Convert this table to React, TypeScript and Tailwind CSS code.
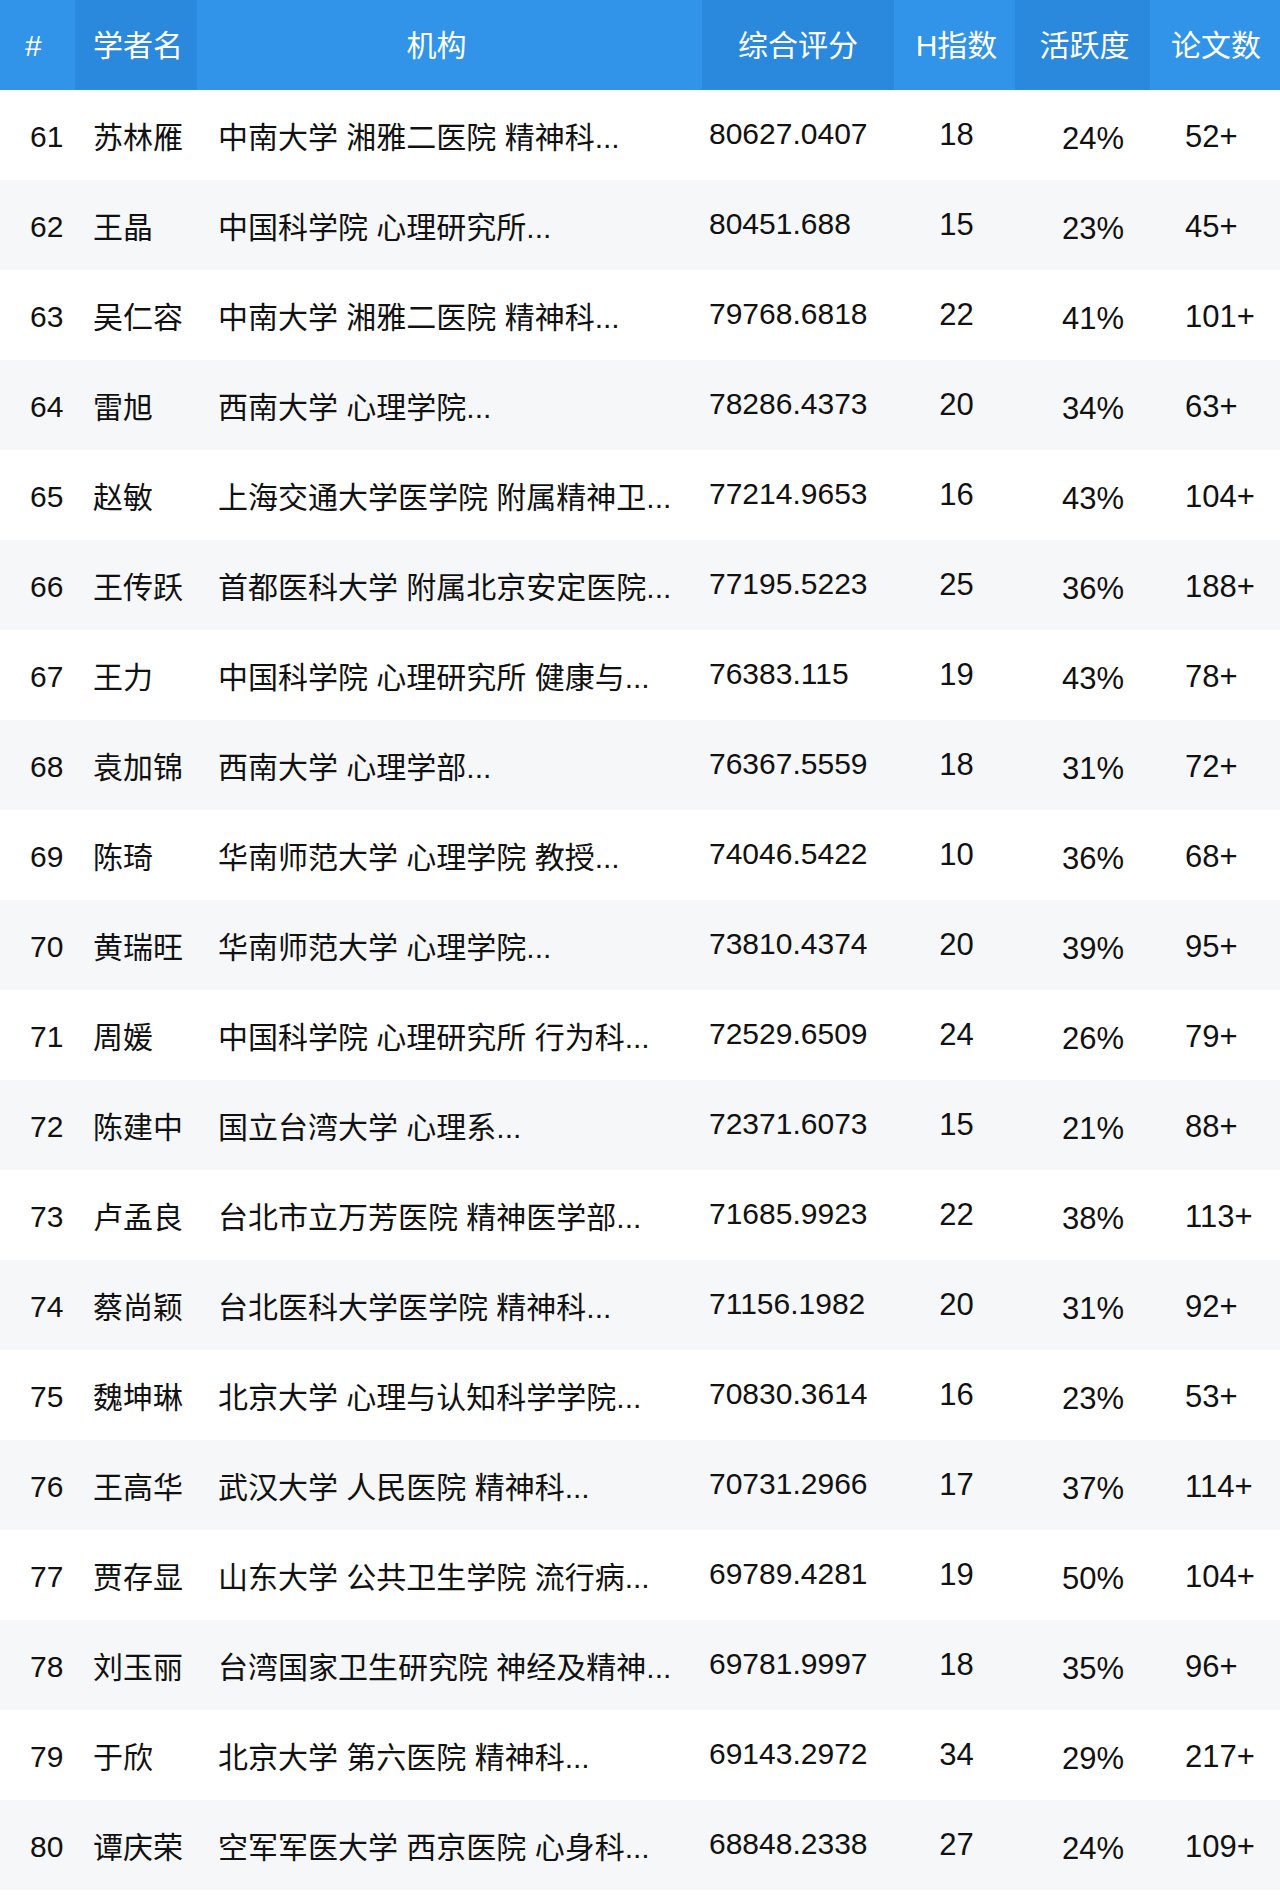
const rows = [
  { rank: 61, name: '苏林雁', org: '中南大学 湘雅二医院 精神科...', score: '80627.0407', h: 18, active: '24%', papers: '52+' },
  { rank: 62, name: '王晶', org: '中国科学院 心理研究所...', score: '80451.688', h: 15, active: '23%', papers: '45+' },
  { rank: 63, name: '吴仁容', org: '中南大学 湘雅二医院 精神科...', score: '79768.6818', h: 22, active: '41%', papers: '101+' },
  { rank: 64, name: '雷旭', org: '西南大学 心理学院...', score: '78286.4373', h: 20, active: '34%', papers: '63+' },
  { rank: 65, name: '赵敏', org: '上海交通大学医学院 附属精神卫...', score: '77214.9653', h: 16, active: '43%', papers: '104+' },
  { rank: 66, name: '王传跃', org: '首都医科大学 附属北京安定医院...', score: '77195.5223', h: 25, active: '36%', papers: '188+' },
  { rank: 67, name: '王力', org: '中国科学院 心理研究所 健康与...', score: '76383.115', h: 19, active: '43%', papers: '78+' },
  { rank: 68, name: '袁加锦', org: '西南大学 心理学部...', score: '76367.5559', h: 18, active: '31%', papers: '72+' },
  { rank: 69, name: '陈琦', org: '华南师范大学 心理学院 教授...', score: '74046.5422', h: 10, active: '36%', papers: '68+' },
  { rank: 70, name: '黄瑞旺', org: '华南师范大学 心理学院...', score: '73810.4374', h: 20, active: '39%', papers: '95+' },
  { rank: 71, name: '周媛', org: '中国科学院 心理研究所 行为科...', score: '72529.6509', h: 24, active: '26%', papers: '79+' },
  { rank: 72, name: '陈建中', org: '国立台湾大学 心理系...', score: '72371.6073', h: 15, active: '21%', papers: '88+' },
  { rank: 73, name: '卢孟良', org: '台北市立万芳医院 精神医学部...', score: '71685.9923', h: 22, active: '38%', papers: '113+' },
  { rank: 74, name: '蔡尚颖', org: '台北医科大学医学院 精神科...', score: '71156.1982', h: 20, active: '31%', papers: '92+' },
  { rank: 75, name: '魏坤琳', org: '北京大学 心理与认知科学学院...', score: '70830.3614', h: 16, active: '23%', papers: '53+' },
  { rank: 76, name: '王高华', org: '武汉大学 人民医院 精神科...', score: '70731.2966', h: 17, active: '37%', papers: '114+' },
  { rank: 77, name: '贾存显', org: '山东大学 公共卫生学院 流行病...', score: '69789.4281', h: 19, active: '50%', papers: '104+' },
  { rank: 78, name: '刘玉丽', org: '台湾国家卫生研究院 神经及精神...', score: '69781.9997', h: 18, active: '35%', papers: '96+' },
  { rank: 79, name: '于欣', org: '北京大学 第六医院 精神科...', score: '69143.2972', h: 34, active: '29%', papers: '217+' },
  { rank: 80, name: '谭庆荣', org: '空军军医大学 西京医院 心身科...', score: '68848.2338', h: 27, active: '24%', papers: '109+' },
];

// fixed column widths, header and body share them
const grid = 'grid grid-cols-[75px_122px_505px_192px_121px_135px_130px]';

export default function App() {
  return (
    <div
      className="w-[1280px] min-h-[1895px] bg-white text-[30px] text-[#111111]"
      style={{ fontFamily: '"Liberation Sans", Arial, "Noto Sans CJK SC", sans-serif' }}
    >
      <div className={`${grid} h-[90px] bg-[#3194e8] text-white`}>
        <div className="flex items-center pl-[25px]">#</div>
        <div className="flex items-center pl-[18px] bg-[#2a88dd]">学者名</div>
        <div className="flex items-center justify-center pr-[26px]">机构</div>
        <div className="flex items-center justify-center bg-[#2a88dd]">综合评分</div>
        <div className="flex items-center justify-center pl-[4px]">H指数</div>
        <div className="flex items-center justify-center pl-[4px] bg-[#2a88dd]">活跃度</div>
        <div className="flex items-center justify-center pl-[2px]">论文数</div>
      </div>

      {rows.map((r, i) => (
        <div key={r.rank} className={`${grid} h-[90px] ${i % 2 === 1 ? 'bg-[#f6f7f9]' : 'bg-white'}`}>
          <div className="flex items-center pl-[30px] pt-[2px]">{r.rank}</div>
          <div className="flex items-center pl-[18px] pt-[4px]">{r.name}</div>
          <div className="flex items-center pl-[21px] pt-[4px] overflow-hidden whitespace-nowrap">{r.org}</div>
          <div className="flex items-center pl-[7px] pb-[3px]">{r.score}</div>
          <div className="flex items-center justify-center pl-[4px] text-[31px]">{r.h}</div>
          <div className="flex items-center pl-[47px] pt-[8px] text-[31px]">{r.active}</div>
          <div className="flex items-center pl-[35px] pt-[5px] text-[31px]">{r.papers}</div>
        </div>
      ))}
    </div>
  );
}
